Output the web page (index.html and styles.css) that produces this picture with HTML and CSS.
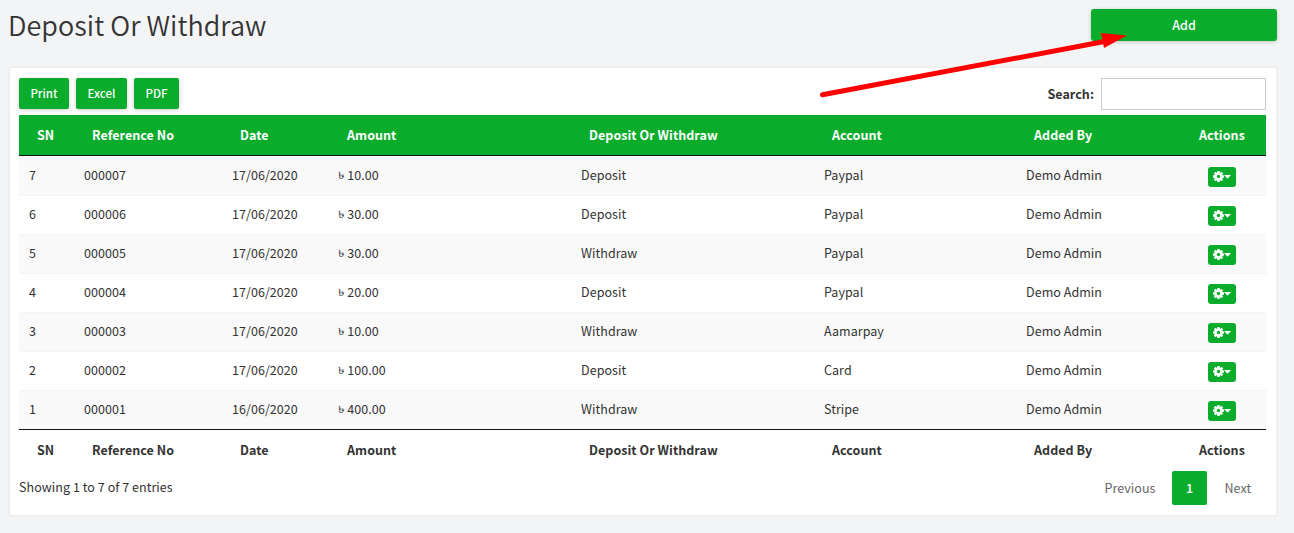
FILE: index.html
```
<!DOCTYPE html>
<html lang="en">
<head>
<meta charset="utf-8">
<title>Deposit Or Withdraw</title>
<link rel="stylesheet" href="styles.css">
</head>
<body>
<header class="page-header">
  <h1 class="page-title">Deposit Or Withdraw</h1>
  <button class="btn btn-add">Add</button>
</header>
<main class="panel">
  <div class="toolbar">
    <div class="exports">
      <button class="btn btn-print">Print</button>
      <button class="btn btn-excel">Excel</button>
      <button class="btn btn-pdf">PDF</button>
    </div>
    <label class="search"><span>Search:</span><input class="search-input" type="text"></label>
  </div>
  <table class="table">
    <colgroup><col class="c-sn"><col class="c-ref"><col class="c-date"><col class="c-amount"><col class="c-type"><col class="c-account"><col class="c-added"><col class="c-actions"></colgroup>
    <thead><tr><th>SN</th><th>Reference No</th><th>Date</th><th>Amount</th><th>Deposit Or Withdraw</th><th>Account</th><th>Added By</th><th>Actions</th></tr></thead>
    <tbody id="rows"></tbody>
    <tfoot><tr><th>SN</th><th>Reference No</th><th>Date</th><th>Amount</th><th>Deposit Or Withdraw</th><th>Account</th><th>Added By</th><th>Actions</th></tr></tfoot>
  </table>
  <div class="table-footer">
    <span class="info">Showing 1 to 7 of 7 entries</span>
    <nav class="pager"><a class="page prev">Previous</a><a class="page current">1</a><a class="page next">Next</a></nav>
  </div>
</main>
<svg class="arrow" width="320" height="80" viewBox="0 0 320 80">
  <path d="M7.500 69.700L292 16" stroke="#f00" stroke-width="5" stroke-linecap="round"/>
  <path d="M286 8L312 10.500L289 23Z" fill="#f00"/>
</svg>
<script src="rows.js"></script>
</body>
</html>
```
FILE: styles.css
```
* { box-sizing: border-box; }
body {
  margin: 0;
  height: 533px;
  overflow: hidden;
  position: relative;
  padding: 9px 17px 0 8px;
  background: #f3f4f6;
  color: #333;
  font: 12.5px/20px "Noto Sans CJK SC", "Noto Sans", sans-serif;
  letter-spacing: .05px;
}
.page-header { display: flex; justify-content: space-between; height: 57px; }
.page-title { margin: 0; font-size: 27px; line-height: 31px; font-weight: 350; letter-spacing: .04px; }
.btn {
  border: 0;
  padding: 0;
  border-radius: 2px;
  background: #0aac2b;
  color: #fff;
  font: inherit;
  font-weight: 500;
  box-shadow: 0 1px 4px rgba(0, 0, 0, .2);
}
.btn-add { width: 186px; height: 32px; border-radius: 3px; }
.panel {
  height: 451px;
  margin-right: -1px;
  padding: 10px 9px 0;
  border: 2px solid #eeeff0;
  border-radius: 4px;
  background: #fff;
}
.toolbar { display: flex; justify-content: space-between; width: 1247px; height: 37px; }
.exports { display: flex; gap: 7px; height: 31px; }
.exports .btn { padding-bottom: 1px; font-size: 11.5px; letter-spacing: 0; }
.btn-print { width: 50px; }
.btn-excel { width: 51px; }
.btn-pdf { width: 45px; }
.search { display: flex; align-items: center; gap: 7px; height: 32px; font-weight: 700; }
.search-input { width: 165px; height: 32px; border: 1px solid #ccc; background: #fff; }
.table { width: 1247px; table-layout: fixed; border-collapse: separate; border-spacing: 0; }
.c-sn { width: 55px; }
.c-ref { width: 148px; }
.c-date { width: 107px; }
.c-amount { width: 242px; }
.c-type { width: 243px; }
.c-account { width: 202px; }
.c-added { width: 165px; }
.c-actions { width: 85px; }
.table th { padding: 0 0 0 18px; text-align: left; font-weight: 700; white-space: nowrap; }
.table thead th { height: 41px; background: #0aac2b; color: #fff; border-bottom: 1px solid #111; }
.table tfoot th { height: 41px; border-top: 1px solid #111; }
.table td { height: 39px; padding: 0 10px 2px; border-top: 1px solid #f4f4f4; }
.table td.amount { padding-left: 9px; }
.table tbody tr:nth-child(odd) td { background: #f9f9f9; }
.table tbody tr:first-child td { border-top-color: #f9f9f9; }
.table td.action { padding: 1px 0 0 27px; }
.taka { display: inline-block; width: 6.500px; font-size: 12px; line-height: 1; transform: scale(1.15, .85); }
.btn-gear { display: flex; align-items: center; justify-content: center; width: 28px; height: 20px; border-radius: 3px; box-shadow: none; }
.table-footer { display: flex; justify-content: space-between; width: 1247px; height: 35px; }
.info { line-height: 33px; }
.pager { display: flex; padding-top: 1px; line-height: 34px; color: #666; }
.prev { width: 67.500px; }
.current { width: 35px; height: 34px; border-radius: 2px; background: #0aac2b; color: #fff; text-align: center; font-weight: 500; }
.next { width: 59px; padding-left: 17.500px; }
.arrow { position: absolute; left: 815px; top: 25px; fill: none; }
```
FILE: rows.js
```
const entries = [
  [7, "17/06/2020", "10.00", "Deposit", "Paypal"],
  [6, "17/06/2020", "30.00", "Deposit", "Paypal"],
  [5, "17/06/2020", "30.00", "Withdraw", "Paypal"],
  [4, "17/06/2020", "20.00", "Deposit", "Paypal"],
  [3, "17/06/2020", "10.00", "Withdraw", "Aamarpay"],
  [2, "17/06/2020", "100.00", "Deposit", "Card"],
  [1, "16/06/2020", "400.00", "Withdraw", "Stripe"]
];
const teeth = [0, 45, 90, 135].map(a => `<rect x="4.200" y="0" width="2.600" height="11" rx=".4" transform="rotate(${a} 5.500 5.500)"/>`).join("");
const gear = `<svg width="11" height="11" viewBox="0 0 11 11" fill="#fff">${teeth}<circle cx="5.500" cy="5.500" r="4.100"/><circle cx="5.500" cy="5.500" r="1.700" fill="#0aac2b"/></svg>`;
const caret = `<svg width="7" height="4" viewBox="0 0 7 4" fill="#fff"><path d="M0 0H7L3.500 3.800Z"/></svg>`;
const taka = `<span class="taka">৳</span>`;
document.getElementById("rows").innerHTML = entries.map(([sn, date, amount, type, account]) => `
  <tr><td>${sn}</td><td>00000${sn}</td><td>${date}</td><td class="amount">${taka} ${amount}</td><td>${type}</td><td>${account}</td><td>Demo Admin</td>
  <td class="action"><button class="btn btn-gear">${gear}${caret}</button></td></tr>`).join("");
```
